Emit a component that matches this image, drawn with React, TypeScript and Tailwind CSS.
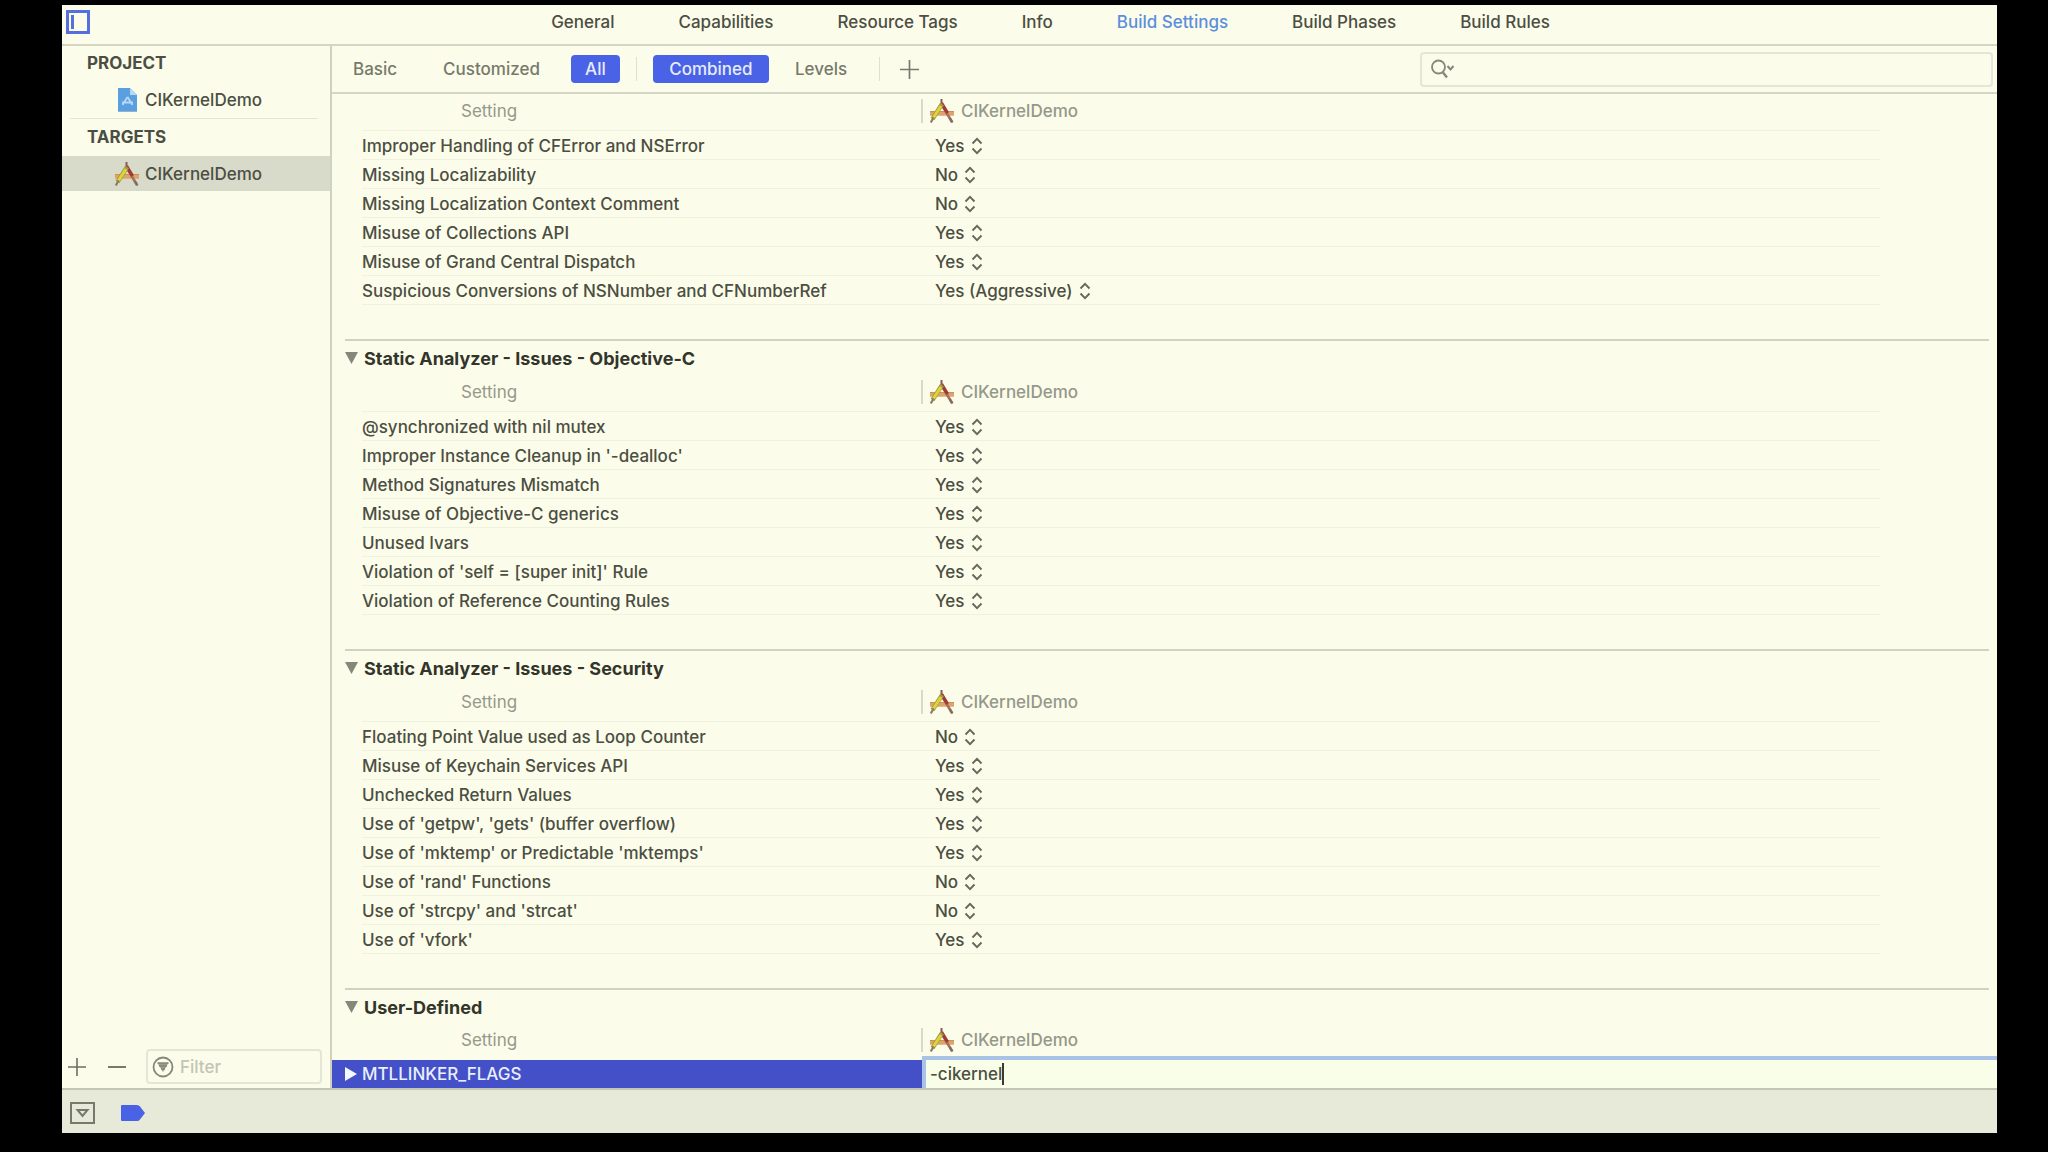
import { useState } from 'react';

const tabs = ['General', 'Capabilities', 'Resource Tags', 'Info', 'Build Settings', 'Build Phases', 'Build Rules'];

type Setting = { name: string; value: string };
type Group = { title?: string; rows: Setting[] };

const groups: Group[] = [
  {
    rows: [
      { name: 'Improper Handling of CFError and NSError', value: 'Yes' },
      { name: 'Missing Localizability', value: 'No' },
      { name: 'Missing Localization Context Comment', value: 'No' },
      { name: 'Misuse of Collections API', value: 'Yes' },
      { name: 'Misuse of Grand Central Dispatch', value: 'Yes' },
      { name: 'Suspicious Conversions of NSNumber and CFNumberRef', value: 'Yes (Aggressive)' },
    ],
  },
  {
    title: 'Static Analyzer - Issues - Objective-C',
    rows: [
      { name: '@synchronized with nil mutex', value: 'Yes' },
      { name: "Improper Instance Cleanup in '-dealloc'", value: 'Yes' },
      { name: 'Method Signatures Mismatch', value: 'Yes' },
      { name: 'Misuse of Objective-C generics', value: 'Yes' },
      { name: 'Unused Ivars', value: 'Yes' },
      { name: "Violation of 'self = [super init]' Rule", value: 'Yes' },
      { name: 'Violation of Reference Counting Rules', value: 'Yes' },
    ],
  },
  {
    title: 'Static Analyzer - Issues - Security',
    rows: [
      { name: 'Floating Point Value used as Loop Counter', value: 'No' },
      { name: 'Misuse of Keychain Services API', value: 'Yes' },
      { name: 'Unchecked Return Values', value: 'Yes' },
      { name: "Use of 'getpw', 'gets' (buffer overflow)", value: 'Yes' },
      { name: "Use of 'mktemp' or Predictable 'mktemps'", value: 'Yes' },
      { name: "Use of 'rand' Functions", value: 'No' },
      { name: "Use of 'strcpy' and 'strcat'", value: 'No' },
      { name: "Use of 'vfork'", value: 'Yes' },
    ],
  },
];

const AppIcon = () => (
  <svg className="h-6 w-[26px] shrink-0" viewBox="0 0 26 24" fill="none" aria-hidden="true">
    <path d="M1 14.500h24" stroke="#dda56c" strokeWidth="4.500" />
    <path d="M1 12.500h24" stroke="#c99058" strokeWidth="1" />
    <path d="M12 4.500L23 23" stroke="#a8705e" strokeWidth="2.600" />
    <path d="M12.500 4L18.500 14" stroke="#a03a36" strokeWidth="3.400" />
    <path d="M12.500 0v5" stroke="#8a5a50" strokeWidth="2" />
    <path d="M13 5L3.500 20" stroke="#a39a48" strokeWidth="4.400" />
    <path d="M12 7L4.500 18.500" stroke="#e0d436" strokeWidth="3" />
    <path d="M4.500 18.500L1.800 23.500" stroke="#8d7d62" strokeWidth="2.200" />
    <path d="M20.800 19l2.700 4.500" stroke="#7d6f62" strokeWidth="2.200" />
  </svg>
);

const ProjectIcon = () => (
  <svg className="h-[26px] w-[26px] shrink-0" viewBox="0 0 26 26" fill="none" aria-hidden="true">
    <path d="M4 1h12l7 7v17H4z" fill="#5b9fe0" />
    <path d="M16 1l7 7h-7z" fill="#b9d8f2" />
    <path d="M4 24.500h19" stroke="#8fb4cf" />
    <path d="M13.500 10l-5 8M13.500 10l5 8M8 15.500h11" stroke="#b5d8f6" strokeWidth="1.800" />
  </svg>
);

const UpDown = () => (
  <svg className="pointer-events-none ml-1.5 h-[18px] w-3" viewBox="0 0 12 18" fill="none" aria-hidden="true">
    <path d="M1.500 6.500L6 1.800l4.500 4.700M1.500 11.500L6 16.200l4.500-4.700" stroke="#66685c" strokeWidth="1.900" />
  </svg>
);

const Plus = ({ className }: { className: string }) => (
  <svg className={className} viewBox="0 0 18 18" fill="none" stroke="currentColor" aria-hidden="true">
    <path d="M9 0v18M0 9h18" strokeWidth="1.600" />
  </svg>
);

const HeaderRow = ({ line = true }: { line?: boolean }) => (
  <thead>
    <tr className="text-[#96988a]">
      <th className={`relative w-[590px] pb-1 pl-[129px] text-left font-normal ${line ? 'h-[37px]' : 'h-9'}`}>
        Setting
        {line && <span className="absolute bottom-0 left-[30px] right-0 h-px bg-[#f0f2e0]" />}
      </th>
      <th className="relative pb-1 text-left font-medium">
        <span className="-ml-px flex items-center border-l-2 border-[#d9dbca] pl-1.5">
          <AppIcon />
          <span className="ml-1.5">CIKernelDemo</span>
        </span>
        {line && <span className="absolute bottom-0 left-0 right-[117px] h-px bg-[#f0f2e0]" />}
      </th>
    </tr>
  </thead>
);

const GroupTitle = ({ children }: { children: string }) => (
  <h2 className="ml-[13px] mr-2 flex h-9 items-center border-t-2 border-[#d0d3c1] pt-0.5 text-lg font-bold text-[#33352a]">
    <svg className="mb-0.5 mr-1.5 h-3 w-[13px]" viewBox="0 0 13 12" aria-hidden="true">
      <path d="M0 0h13L6.500 12z" fill="#85877a" />
    </svg>
    {children}
  </h2>
);

const SettingRow = ({ name, value }: Setting) => {
  const [current, setCurrent] = useState(value);
  const options = value.includes('(') ? ['Yes (Aggressive)', 'Yes', 'No'] : ['Yes', 'No'];
  return (
    <tr className="h-[29px]">
      <td className="relative py-0 pl-[30px]">
        {name}
        <span className="absolute bottom-0 left-[30px] right-0 h-px bg-[#f0f2e0]" />
      </td>
      <td className="relative py-0 pl-[13px]">
        <span className="flex items-center">
          <select
            aria-label={name}
            value={current}
            onChange={(e) => setCurrent(e.target.value)}
            className="field-sizing-content appearance-none bg-transparent leading-6 outline-none"
          >
            {options.map((option) => (
              <option key={option}>{option}</option>
            ))}
          </select>
          <UpDown />
        </span>
        <span className="absolute bottom-0 left-0 right-[117px] h-px bg-[#f0f2e0]" />
      </td>
    </tr>
  );
};

const Sidebar = () => (
  <aside className="flex w-[270px] shrink-0 flex-col border-r-2 border-[#cfd2c0]">
    <h2 className="flex h-[35px] items-center pb-0.5 pl-[25px] font-bold">PROJECT</h2>
    <a href="#project" className="flex h-[37px] items-center pl-[52px]">
      <ProjectIcon />
      <span className="ml-[5px]">CIKernelDemo</span>
    </a>
    <hr className="ml-2 mr-3 border-[#e4e6d5]" />
    <h2 className="flex h-[37px] items-center pb-0.5 pl-[25px] font-bold">TARGETS</h2>
    <a href="#target" className="flex h-[35px] items-center bg-[#d8dbca] pl-[52px]">
      <AppIcon />
      <span className="ml-[5px]">CIKernelDemo</span>
    </a>
    <div className="mt-auto flex items-center pb-1 pl-1.5 pr-2 text-[#6c6e62]">
      <button aria-label="Add target" className="flex">
        <Plus className="h-[18px] w-[18px]" />
      </button>
      <button aria-label="Remove target" className="ml-[22px] flex h-[18px] w-[18px] items-center">
        <span className="h-0.5 w-full bg-[#77796c]" />
      </button>
      <label className="ml-5 flex h-[35px] min-w-0 flex-1 items-center rounded border-2 border-[#e4e7d5] px-1">
        <svg className="h-[22px] w-[22px] shrink-0" viewBox="0 0 22 22" fill="none" aria-hidden="true">
          <circle cx="11" cy="11" r="9.500" stroke="#85877a" strokeWidth="1.800" />
          <path d="M5.500 7h11L11 16z" fill="#9a9c8f" />
          <path d="M5.500 7h11M7 10h8M9 13h4" stroke="#85877a" strokeWidth="1.500" />
        </svg>
        <input
          aria-label="Filter"
          placeholder="Filter"
          className="ml-1.5 w-full min-w-0 bg-transparent outline-none placeholder:text-[#c3c5b5]"
        />
      </label>
    </div>
  </aside>
);

const Toolbar = () => (
  <div className="flex h-12 items-center border-b-2 border-[#d3d6c4] pr-1 text-[#77796c]">
    <button className="ml-[21px]">Basic</button>
    <button className="ml-[46px]">Customized</button>
    <button className="ml-[31px] h-7 w-[49px] rounded bg-[#4a63e6] text-[#e6edfb]">All</button>
    <span className="ml-4 h-6 w-px bg-[#dfe1d0]" />
    <button className="ml-4 h-7 w-[116px] rounded bg-[#4a63e6] text-[#e6edfb]">Combined</button>
    <button className="ml-[26px]">Levels</button>
    <span className="ml-8 h-6 w-px bg-[#dfe1d0]" />
    <button aria-label="Add build setting" className="ml-5 flex">
      <Plus className="h-[19px] w-[19px]" />
    </button>
    <label className="ml-auto flex h-[35px] w-[573px] items-center rounded border-2 border-[#e4e7d5] pl-2">
      <svg className="h-[22px] w-7 shrink-0" viewBox="0 0 28 22" fill="none" stroke="#85877a" aria-hidden="true">
        <circle cx="8.500" cy="9" r="6.500" strokeWidth="1.800" />
        <path d="M13 14.500l4 5" strokeWidth="2.400" />
        <path d="M17.500 8l3 3.500 3-3.500" strokeWidth="2" />
      </svg>
      <input aria-label="Search build settings" className="w-full bg-transparent outline-none" />
    </label>
  </div>
);

const App = () => {
  const [flags, setFlags] = useState('-cikernel');

  return (
    <div className="flex min-h-screen flex-col bg-black pb-[19px] pl-[62px] pr-[51px] pt-[5px] font-['Inter',sans-serif] text-[17px] font-medium leading-6 text-[#4c4e43]">
      <div className="flex flex-1 flex-col bg-[#fbfdea]">
        {/* Editor tabs */}
        <header className="flex h-[41px] items-center border-b-2 border-[#d3d6c4] pb-1.5">
          <button aria-label="Toggle project list" className="ml-1 flex w-[38px]">
            <svg className="h-6 w-6" viewBox="0 0 24 24" fill="none" aria-hidden="true">
              <rect x="1.500" y="1.500" width="21" height="21" stroke="#566fe0" strokeWidth="3" />
              <path d="M6.500 5v14" stroke="#566fe0" strokeWidth="3" />
            </svg>
          </button>
          <nav className="flex flex-1 justify-center gap-16">
            {tabs.map((tab) => (
              <button key={tab} className={tab === 'Build Settings' ? 'text-[#5b8fdc]' : ''}>
                {tab}
              </button>
            ))}
          </nav>
        </header>

        <div className="flex flex-1">
          <Sidebar />

          <main className="min-w-0 flex-1">
            <Toolbar />

            {groups.map((group, index) => (
              <section key={index} className="pb-[34px]">
                {group.title && <GroupTitle>{group.title}</GroupTitle>}
                <table className="w-full table-fixed border-collapse">
                  <HeaderRow />
                  <tbody>
                    {group.rows.map((row) => (
                      <SettingRow key={row.name} {...row} />
                    ))}
                  </tbody>
                </table>
              </section>
            ))}

            <section>
              <GroupTitle>User-Defined</GroupTitle>
              <table className="w-full table-fixed border-collapse">
                <HeaderRow line={false} />
                <tbody>
                  <tr className="h-7">
                    <td className="bg-[#4450c8] py-0 pl-[13px] text-[#e9effc]">
                      <span className="flex items-center">
                        <svg className="mr-[5px] h-[14px] w-3" viewBox="0 0 12 14" aria-hidden="true">
                          <path d="M0 0l12 7-12 7z" fill="#f4f8ff" />
                        </svg>
                        MTLLINKER_FLAGS
                      </span>
                    </td>
                    <td className="relative p-0">
                      <div className="absolute -top-1 bottom-0 left-0 right-0 flex items-center border-l-4 border-t-4 border-[#a9c3e6] bg-[#f8fee8] pl-1">
                        <input
                          aria-label="MTLLINKER_FLAGS"
                          value={flags}
                          onChange={(e) => setFlags(e.target.value)}
                          className="field-sizing-content bg-transparent outline-none"
                        />
                        <span className="h-[22px] w-0.5 bg-[#3a3c30]" />
                      </div>
                    </td>
                  </tr>
                </tbody>
              </table>
            </section>
          </main>
        </div>

        {/* Debug bar */}
        <footer className="flex h-[45px] items-center border-t-2 border-[#c3c6b3] bg-[#e7ead9] pl-2 pt-0.5">
          <button aria-label="Hide debug area" className="flex">
            <svg className="h-[22px] w-[25px]" viewBox="0 0 25 22" fill="none" stroke="#77796a" aria-hidden="true">
              <rect x="1" y="1" width="23" height="20" strokeWidth="2" />
              <path d="M7.500 8h10L12.500 14z" strokeWidth="2" />
            </svg>
          </button>
          <button aria-label="Activate breakpoints" className="ml-[26px] flex">
            <svg className="h-4 w-6" viewBox="0 0 24 16" aria-hidden="true">
              <path d="M1 0h15q2 0 3 1.500L24 8l-5 6.500Q18 16 16 16H1q-1 0-1-1V1q0-1 1-1z" fill="#4a63e6" />
            </svg>
          </button>
        </footer>
      </div>
    </div>
  );
};

export default App;
